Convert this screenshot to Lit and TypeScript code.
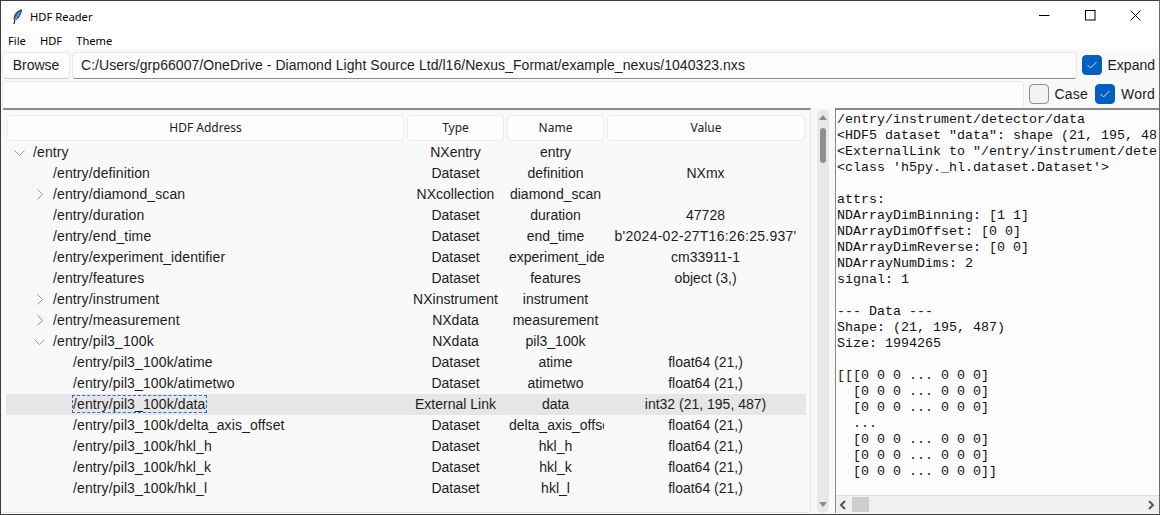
import { LitElement, html, css, svg } from 'lit';
import { customElement } from 'lit/decorators.js';

interface TreeRow {
    address: string;
    type: string;
    name: string;
    value: string;
    depth: number;
    toggle?: 'open' | 'closed';
    selected?: boolean;
    long?: boolean;
}

const ROWS: TreeRow[] = [
    { address: '/entry', type: 'NXentry', name: 'entry', value: '', depth: 0, toggle: 'open' },
    { address: '/entry/definition', type: 'Dataset', name: 'definition', value: 'NXmx', depth: 1 },
    { address: '/entry/diamond_scan', type: 'NXcollection', name: 'diamond_scan', value: '', depth: 1, toggle: 'closed' },
    { address: '/entry/duration', type: 'Dataset', name: 'duration', value: '47728', depth: 1 },
    { address: '/entry/end_time', type: 'Dataset', name: 'end_time', value: "b'2024-02-27T16:26:25.937'", depth: 1, long: true },
    { address: '/entry/experiment_identifier', type: 'Dataset', name: 'experiment_identifier', value: 'cm33911-1', depth: 1 },
    { address: '/entry/features', type: 'Dataset', name: 'features', value: 'object (3,)', depth: 1 },
    { address: '/entry/instrument', type: 'NXinstrument', name: 'instrument', value: '', depth: 1, toggle: 'closed' },
    { address: '/entry/measurement', type: 'NXdata', name: 'measurement', value: '', depth: 1, toggle: 'closed' },
    { address: '/entry/pil3_100k', type: 'NXdata', name: 'pil3_100k', value: '', depth: 1, toggle: 'open' },
    { address: '/entry/pil3_100k/atime', type: 'Dataset', name: 'atime', value: 'float64 (21,)', depth: 2 },
    { address: '/entry/pil3_100k/atimetwo', type: 'Dataset', name: 'atimetwo', value: 'float64 (21,)', depth: 2 },
    { address: '/entry/pil3_100k/data', type: 'External Link', name: 'data', value: 'int32 (21, 195, 487)', depth: 2, selected: true },
    { address: '/entry/pil3_100k/delta_axis_offset', type: 'Dataset', name: 'delta_axis_offset', value: 'float64 (21,)', depth: 2 },
    { address: '/entry/pil3_100k/hkl_h', type: 'Dataset', name: 'hkl_h', value: 'float64 (21,)', depth: 2 },
    { address: '/entry/pil3_100k/hkl_k', type: 'Dataset', name: 'hkl_k', value: 'float64 (21,)', depth: 2 },
    { address: '/entry/pil3_100k/hkl_l', type: 'Dataset', name: 'hkl_l', value: 'float64 (21,)', depth: 2 },
];

const DETAILS = `/entry/instrument/detector/data
<HDF5 dataset "data": shape (21, 195, 487), type "<i4">
<ExternalLink to "/entry/instrument/detector/data" in file>
<class 'h5py._hl.dataset.Dataset'>

attrs:
NDArrayDimBinning: [1 1]
NDArrayDimOffset: [0 0]
NDArrayDimReverse: [0 0]
NDArrayNumDims: 2
signal: 1

--- Data ---
Shape: (21, 195, 487)
Size: 1994265

[[[0 0 0 ... 0 0 0]
  [0 0 0 ... 0 0 0]
  [0 0 0 ... 0 0 0]
  ...
  [0 0 0 ... 0 0 0]
  [0 0 0 ... 0 0 0]
  [0 0 0 ... 0 0 0]]`;

const chevron = (dir: 'open' | 'closed') =>
    dir === 'open'
        ? svg`<path d="M.5 3.500l5 5 5-5" fill="none" stroke="#9a9a9a" stroke-width="1" />`
        : svg`<path d="M3.500.5l5 5-5 5" fill="none" stroke="#9a9a9a" stroke-width="1" />`;

@customElement('app-root')
export class AppRoot extends LitElement {
    static override styles = css`
        :host {
            display: block;
            width: 1160px;
            height: 515px;
            box-sizing: border-box;
            overflow: hidden;
            border: 1px solid #3c3c3c;
            border-right-color: #6a6a6a;
            background: #f9f9f9;
            font-family: 'Liberation Sans', Arial, sans-serif;
            color: #1c1c1c;
        }

        .titlebar {
            height: 31px;
            display: flex;
            align-items: center;
            background: #fff;
            font: 11.2px 'Noto Sans', sans-serif;
            color: #000;
        }
        .app-icon {
            margin-left: 12px;
            margin-right: 8px;
        }
        .window-buttons {
            margin-left: auto;
            display: flex;
            margin-bottom: 2px;
        }
        .window-button {
            box-sizing: border-box;
            width: 46px;
            height: 30px;
            display: flex;
            align-items: center;
            justify-content: center;
        }
        .window-button:last-child {
            padding-right: 2px;
        }

        .menubar {
            height: 17px;
            display: flex;
            gap: 14px;
            padding-left: 7px;
            align-items: center;
            background: #fff;
            font: 11.2px 'Noto Sans', sans-serif;
            color: #000;
        }

        .toolbar {
            display: flex;
            align-items: flex-start;
            height: 31px;
        }
        .button {
            width: 68px;
            height: 27px;
            margin: 3px 0 0 1px;
            box-sizing: border-box;
            display: flex;
            align-items: center;
            justify-content: center;
            padding-bottom: 1px;
            background: #fdfdfd;
            border: 1px solid #e8e8e8;
            border-bottom-color: #cfcfcf;
            border-radius: 4px;
            font-size: 14px;
        }
        .entry {
            box-sizing: border-box;
            height: 27px;
            display: flex;
            align-items: center;
            padding-bottom: 1px;
            background: #fcfcfc;
            border: 1px solid #e8e8e8;
            border-bottom: 1px solid #8a8a8a;
            border-radius: 4px;
            padding-left: 8px;
            font-size: 14px;
            letter-spacing: 0.05px;
        }
        .path {
            flex: 1;
            margin: 3px 0 0 2px;
        }
        .check {
            display: flex;
            align-items: center;
            gap: 6px;
            font-size: 14px;
            margin-top: 6px;
            margin-left: 5px;
        }
        .box {
            box-sizing: border-box;
            width: 20px;
            height: 20px;
            border-radius: 4px;
            background: #f3f3f3;
            border: 1px solid #8c8c8c;
            display: flex;
            align-items: center;
            justify-content: center;
        }
        .box.on {
            background: #0060c0;
            border-color: #0060c0;
        }
        .toolbar > .check:last-child {
            margin-right: 4px;
        }
        .search-row {
            height: 28px;
        }
        .search {
            flex: 1;
            border-bottom: none;
            margin: 1px 0 0 1px;
        }
        .search-row .check {
            margin-top: 4px;
            letter-spacing: 0.2px;
        }
        .search-row .check + .check {
            margin-left: 7px;
        }

        .main {
            display: flex;
            height: 405px;
        }
        .tree-pane {
            width: 808px;
            flex: none;
            box-sizing: border-box;
            margin-left: 2px;
            border-top: 2px solid #8a8a8a;
            padding: 5px 0 0 4px;
            border-right: 1px solid #e6e6e6;
            border-bottom: 1px solid #e6e6e6;
            border-bottom-right-radius: 4px;
        }
        .tree-head {
            display: grid;
            grid-template-columns: 400px 100px 100px 198px;
            height: 27px;
        }
        .tree-row {
            display: grid;
            grid-template-columns: 401px 100px 100px 198px;
            width: 800px;
            margin-left: -1px;
            height: 21px;
            line-height: 21px;
            font-size: 14px;
        }
        .head-cell {
            box-sizing: border-box;
            height: 26px;
            margin-right: 3px;
            padding-bottom: 1px;
            display: flex;
            align-items: center;
            justify-content: center;
            border: 1px solid #ececec;
            border-radius: 4px;
            background: #fdfdfd;
            font: 12px 'Noto Sans', sans-serif;
            color: #222;
        }
        .head-cell:last-child {
            margin-right: 0;
        }
        .tree-row.selected {
            background: #e6e6e6;
        }
        .cell {
            box-sizing: border-box;
            text-align: center;
            white-space: nowrap;
            overflow: hidden;
            margin-right: 3px;
            padding: 0 2px;
        }
        .cell:last-child {
            margin-right: 1px;
        }
        .cell.long {
            letter-spacing: 0.27px;
        }
        .address {
            display: flex;
            align-items: center;
            text-align: left;
            overflow: visible;
            letter-spacing: 0.12px;
            padding: 0;
        }
        .indent-0 { padding-left: 8px; }
        .indent-1 { padding-left: 28px; }
        .indent-2 { padding-left: 48px; }
        .chev {
            width: 11px;
            height: 11px;
            flex: none;
            margin-right: 8px;
        }
        .label {
            line-height: 16px;
            margin-bottom: 1px;
        }
        .selected .label {
            outline: 1px dashed #2a6fd0;
        }

        .vscroll {
            width: 12px;
            height: 404px;
            flex: none;
            margin: 1px 6px 0 6px;
            background: #e8e8e8;
            border-radius: 6px;
            display: flex;
            flex-direction: column;
            align-items: center;
        }
        .arrow-up,
        .arrow-down {
            width: 0;
            height: 0;
            border-left: 4px solid transparent;
            border-right: 4px solid transparent;
            margin-top: 6px;
        }
        .arrow-up {
            border-bottom: 5px solid #8a8a8a;
        }
        .arrow-down {
            border-top: 5px solid #8a8a8a;
            margin-top: auto;
            margin-bottom: 6px;
        }
        .vthumb {
            width: 6px;
            height: 35px;
            border-radius: 3px;
            background: #8f8f8f;
            margin-top: 8px;
        }

        .detail-pane {
            flex: 1;
            min-width: 0;
            display: flex;
            flex-direction: column;
            border-top: 2px solid #8a8a8a;
            border-left: 1px solid #8a8a8a;
        }
        .detail-body {
            flex: 1;
            min-height: 0;
            padding: 2px 2px 0 1px;
            background: #fcfcfc;
            border-bottom: 1px solid #e0e0e0;
        }
        .detail-text {
            height: 100%;
            overflow: hidden;
            margin: 0;
            font: 13.333px/16px 'Liberation Mono', 'Courier New', monospace;
            color: #111;
        }
        .hscroll {
            height: 17px;
            flex: none;
            display: flex;
            align-items: center;
            background: #f0f0f0;
            padding-left: 3px;
        }
        .hthumb {
            width: 17px;
            height: 15px;
            background: #cdcdcd;
            margin-left: 5px;
        }
        .harrow-right {
            margin-left: auto;
            margin-right: 4px;
        }
    `;

    private _renderCheck(label: string, on: boolean) {
        return html`
            <div class="check">
                <div class="box ${on ? 'on' : ''}">
                    ${on
                        ? html`<svg width="12" height="10" viewBox="0 0 12 10" fill="none">
                              <path d="M1.5 5l3 3 6-6" stroke="#cfe4fa" stroke-width="1" />
                          </svg>`
                        : ''}
                </div>
                <span>${label}</span>
            </div>
        `;
    }

    private _renderRow(row: TreeRow) {
        return html`
            <div class="tree-row ${row.selected ? 'selected' : ''}">
                <div class="cell address indent-${row.depth}">
                    ${row.toggle
                        ? html`<svg class="chev" viewBox="0 0 11 11">${chevron(row.toggle)}</svg>`
                        : html`<span class="chev"></span>`}
                    <span class="label">${row.address}</span>
                </div>
                <div class="cell">${row.type}</div>
                <div class="cell">${row.name}</div>
                <div class="cell ${row.long ? 'long' : ''}">${row.value}</div>
            </div>
        `;
    }

    override render() {
        return html`
            <div class="titlebar">
                <svg class="app-icon" width="9" height="16" viewBox="0 0 10 17">
                    <path d="M9.500.5C6.500 1 3 3.500 1.800 7c-.7 2-.7 3.800-.2 5.300C5 11.500 8.500 7 9.500.5z" fill="#2f6bc8" stroke="#1c2b48" stroke-width="1" />
                    <path d="M7.500 3.500C5.500 6 3.500 9.500 2 13.500" stroke="#9cc4f2" stroke-width="1" fill="none" />
                    <path d="M2 12.500L1 16.500" stroke="#111" stroke-width="1.200" fill="none" />
                </svg>
                <span>HDF Reader</span>
                <div class="window-buttons">
                    <div class="window-button">
                        <svg width="11" height="11" viewBox="0 0 11 11"><path d="M0 5.500h10.500" stroke="#000" /></svg>
                    </div>
                    <div class="window-button">
                        <svg width="11" height="11" viewBox="0 0 11 11"><rect x=".5" y=".5" width="9.500" height="9.500" fill="none" stroke="#000" /></svg>
                    </div>
                    <div class="window-button">
                        <svg width="11" height="11" viewBox="0 0 11 11"><path d="M.5.5l10 10M10.500.5l-10 10" stroke="#000" /></svg>
                    </div>
                </div>
            </div>
            <div class="menubar"><span>File</span><span>HDF</span><span>Theme</span></div>
            <div class="toolbar">
                <div class="button">Browse</div>
                <div class="entry path">C:/Users/grp66007/OneDrive - Diamond Light Source Ltd/l16/Nexus_Format/example_nexus/1040323.nxs</div>
                ${this._renderCheck('Expand', true)}
            </div>
            <div class="toolbar search-row">
                <div class="entry search"></div>
                ${this._renderCheck('Case', false)} ${this._renderCheck('Word', true)}
            </div>
            <div class="main">
                <div class="tree-pane">
                    <div class="tree-head">
                        <div class="head-cell">HDF Address</div>
                        <div class="head-cell">Type</div>
                        <div class="head-cell">Name</div>
                        <div class="head-cell">Value</div>
                    </div>
                    ${ROWS.map((row) => this._renderRow(row))}
                </div>
                <div class="vscroll">
                    <div class="arrow-up"></div>
                    <div class="vthumb"></div>
                    <div class="arrow-down"></div>
                </div>
                <div class="detail-pane">
                    <div class="detail-body"><pre class="detail-text">${DETAILS}</pre></div>
                    <div class="hscroll">
                        <svg width="8" height="10" viewBox="0 0 8 10"><path d="M6 1L2 5l4 4" fill="none" stroke="#555" stroke-width="2" /></svg>
                        <div class="hthumb"></div>
                        <svg class="harrow-right" width="8" height="10" viewBox="0 0 8 10"><path d="M2 1l4 4-4 4" fill="none" stroke="#555" stroke-width="2" /></svg>
                    </div>
                </div>
            </div>
        `;
    }
}
